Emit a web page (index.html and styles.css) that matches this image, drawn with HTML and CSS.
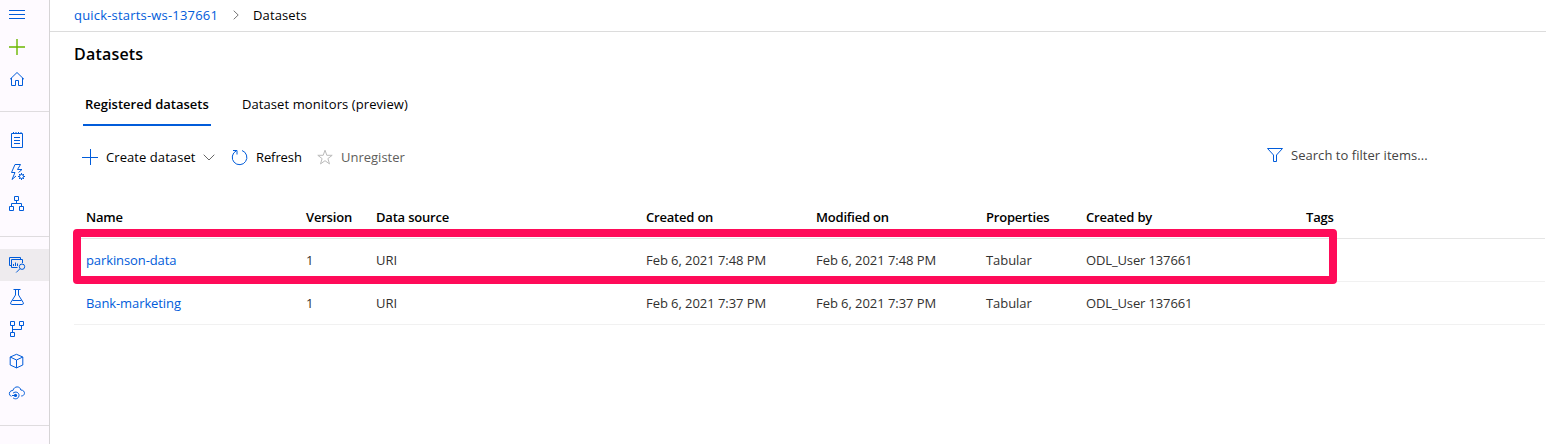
FILE: index.html
```html
<!DOCTYPE html>
<html lang="en">
<head>
<meta charset="utf-8">
<title>Datasets</title>
<link rel="stylesheet" href="styles.css">
</head>
<body>
<div class="app">
  <nav class="sidebar">
    <a class="nav-item nav-first"><svg class="icon" viewBox="0 0 16 16"><path d="M0 3.500h16M0 7.500h16M0 11.500h16"/></svg></a>
    <a class="nav-item nav-add"><svg class="icon" viewBox="0 0 16 16"><path d="M8 0v16M0 8h16"/></svg></a>
    <a class="nav-item"><svg class="icon" viewBox="0 0 16 16"><path d="M1 8.300 8 1.500l7 6.800M2.500 7v7.500h4v-5h3v5h4V7"/></svg></a>
    <hr class="divider">
    <a class="nav-item"><svg class="icon" viewBox="0 0 16 16"><path d="M2.500 1.500h11v14h-11zM5 5.500h6M5 8.500h6M5 11.500h6M4.500 0v2M7 0v2M9.500 0v2M12 0v2"/></svg></a>
    <a class="nav-item"><svg class="icon" viewBox="0 0 16 16"><path d="M6 .500h5.500L8.500 5.500H13L9.500 8.500M6 .500 2.500 8.500H6L3 15.500 7 12"/><circle cx="12.500" cy="12.500" r="2"/><path d="M12.500 9v1.500M12.500 14.500V16M9 12.500h1.500M14.500 12.500H16M10 10l1 1M14 14l1 1M15 10l-1 1M11 14l-1 1"/></svg></a>
    <a class="nav-item"><svg class="icon" viewBox="0 0 16 16"><path d="M5.500.500h4v4h-4zM.500 10.500h4v4h-4zM10.500 10.500h4v4h-4zM7.500 4.500v3M2.500 10.500v-3h10v3"/></svg></a>
    <hr class="divider">
    <a class="nav-item nav-active"><svg class="icon" viewBox="0 0 16 16"><path d="M2.500 8.500h-2v-8h11v2M8.500 10.500h-6v-8h11v3.500"/><path d="M4.500 9V7M6.500 9V5.500M8.500 9V6.500"/><circle cx="13" cy="9.700" r="2.700"/><path d="M11.100 11.600 7.200 15.500"/></svg></a>
    <a class="nav-item"><svg class="icon" viewBox="0 0 16 16"><path d="M4.500.500h7M6.500.500V6L1.800 13.500q-.7 2 1 2h10.400q1.700 0 1-2L9.500 6V.500M3.500 11.500h9"/></svg></a>
    <a class="nav-item"><svg class="icon" viewBox="0 0 16 16"><path d="M1.500.500h4v4h-4zM10.500.500h4v4h-4zM1.500 11.500h4v4h-4zM3.500 4.500v7M3.500 8.500h9v-4"/></svg></a>
    <a class="nav-item"><svg class="icon" viewBox="0 0 16 16"><path d="M7.500 1.300 13.800 4v8L7.500 14.900 1.200 12V4zM1.200 4l6.300 3 6.300-3M7.500 7v7.900"/></svg></a>
    <a class="nav-item"><svg class="icon" viewBox="0 0 16 16"><path d="M2.500 11.300C-.8 10.600-.2 5.200 3.900 5.500 5.200.600 11.300 1 11.800 5c4.800 0 4.800 6 .4 6"/><path d="M4 8.200C6.500 5.800 10.500 7.500 10 10.800 9.300 14.200 5.800 14.500 4 12.800"/><path d="M3 10.500h2.500"/><circle cx="6.500" cy="10.400" r="1.600" fill="currentColor" stroke="none"/></svg></a>
    <hr class="divider">
  </nav>
  <main class="main">
    <header class="breadcrumb">
      <a class="link crumb-root">quick-starts-ws-137661</a>
      <svg class="crumb-arrow" viewBox="0 0 6 10"><path d="M.7.700 5.200 5 .700 9.300"/></svg>
      <span class="crumb-current">Datasets</span>
    </header>
    <h1 class="title">Datasets</h1>
    <div class="tabs">
      <a class="tab tab-active">Registered datasets</a>
      <a class="tab tab-preview">Dataset monitors (preview)</a>
    </div>
    <div class="commands">
      <div class="command create"><svg class="icon" viewBox="0 0 16 16"><path d="M8.500 0v16M0 8.500h16"/></svg><span class="t-create">Create dataset</span><svg class="chevron" viewBox="0 0 12 7"><path d="M.7.700 6 6 11.300.700"/></svg></div>
      <div class="command refresh"><svg class="icon refresh-icon" viewBox="0 0 17 17"><path d="M11 1.500A7.300 7.300 0 1 1 5.200 1.900M2 1.500h4v4"/></svg><span class="t-refresh">Refresh</span></div>
      <div class="command unregister"><svg class="icon star" viewBox="0 0 16 16"><path d="m8 1.200 1.800 5.100h5.400l-4.300 3.300 1.600 5.300L8 11.700l-4.500 3.200 1.600-5.300L.800 6.300h5.400z"/></svg><span class="t-unregister">Unregister</span></div>
      <div class="search"><svg class="icon" viewBox="0 0 16 16"><path d="M.5 1.500h15L9.500 8v6.500h-3V8z"/></svg><span class="t-search">Search to filter items...</span></div>
    </div>
    <section class="table">
      <div class="row head"><span>Name</span><span>Version</span><span>Data source</span><span>Created on</span><span>Modified on</span><span>Properties</span><span>Created by</span><span>Tags</span></div>
      <div class="row"><a class="link">parkinson-data</a><span>1</span><span>URI</span><span>Feb 6, 2021 7:48 PM</span><span>Feb 6, 2021 7:48 PM</span><span>Tabular</span><span class="user">ODL_User 137661</span><span></span></div>
      <div class="row"><a class="link">Bank-marketing</a><span>1</span><span>URI</span><span>Feb 6, 2021 7:37 PM</span><span>Feb 6, 2021 7:37 PM</span><span>Tabular</span><span class="user">ODL_User 137661</span><span></span></div>
      <div class="highlight"></div>
    </section>
  </main>
</div>
</body>
</html>
```
FILE: styles.css
```css
* { box-sizing: border-box; }
body { margin: 0; background: #fff; color: #000; font: 13px/20px "Open Sans", "Noto Sans", sans-serif; white-space: nowrap; overflow: hidden; }
.app { display: flex; height: 444px; }
.sidebar { width: 50px; flex: none; background: #fefaff; border-right: 1px solid #d6d4d6; color: #015cda; }
.nav-item { display: flex; align-items: center; height: 32px; padding-left: 9px; }
.nav-first { height: 31px; align-items: flex-start; padding-top: 7px; }
.nav-add { color: #6bb700; }
.nav-add .icon { stroke-width: 1.4; }
.nav-active { background: #eeebee; }
.icon { width: 16px; height: 16px; flex: none; display: block; }
svg { fill: none; stroke: currentColor; stroke-width: 1; overflow: visible; }
.divider { border: 0; height: 1px; background: #dfdcdf; margin: 16px 0 12px; }
.main { flex: 1; min-width: 0; }
.breadcrumb { display: flex; align-items: center; height: 32px; padding: 0 0 2px 24px; border-bottom: 1px solid #dcdcdc; }
.link { color: #015cda; }
.crumb-root { letter-spacing: .19px; }
.crumb-current { letter-spacing: .1px; }
.crumb-arrow { width: 6px; height: 10px; margin: 0 14px 0 15px; color: #777; }
.title { margin: 12px 0 0 24px; font-size: 16px; line-height: 20px; font-weight: 600; letter-spacing: .2px; }
.tabs { display: flex; height: 42px; margin: 20px 0 0 33px; gap: 31px; }
.tab { line-height: 40px; }
.tab-active { width: 128px; padding-left: 2px; font-weight: 600; border-bottom: 2px solid #015cda; }
.tab-preview { letter-spacing: .08px; }
.commands { display: flex; align-items: center; height: 62px; padding-left: 32px; }
.command { display: flex; align-items: center; gap: 8px; }
.command .icon { color: #015cda; }
.create { width: 149px; }
.refresh { width: 86px; }
.create .chevron { width: 12px; height: 7px; color: #666; }
.refresh .refresh-icon { width: 17px; height: 17px; }
.t-create { letter-spacing: .07px; }
.t-refresh { letter-spacing: -.1px; }
.unregister { color: #605e5c; }
.command .star { color: #bbb; }
.search { display: flex; align-items: center; gap: 8px; margin: -4px 0 0 auto; width: 279px; color: #444; }
.search .icon { color: #015cda; }
.t-search { letter-spacing: .04px; }
.table { position: relative; margin: 8px 1px 0 24px; }
.row { display: grid; grid-template-columns: 220px 70px 270px 170px 170px 100px 220px 1fr; align-items: center; height: 43px; padding-left: 12px; border-bottom: 1px solid #f1f1f1; color: #323130; letter-spacing: -.06px; }
.row .link { color: #015cda; letter-spacing: -.1px; }
.row .user { letter-spacing: -.13px; }
.head { color: #000; font-weight: 600; border-color: #e5e5e5; letter-spacing: -.2px; }
.highlight { position: absolute; left: -1px; top: 33px; width: 1264px; height: 55px; border: 8px solid #ff0b59; border-radius: 4px; }
```
